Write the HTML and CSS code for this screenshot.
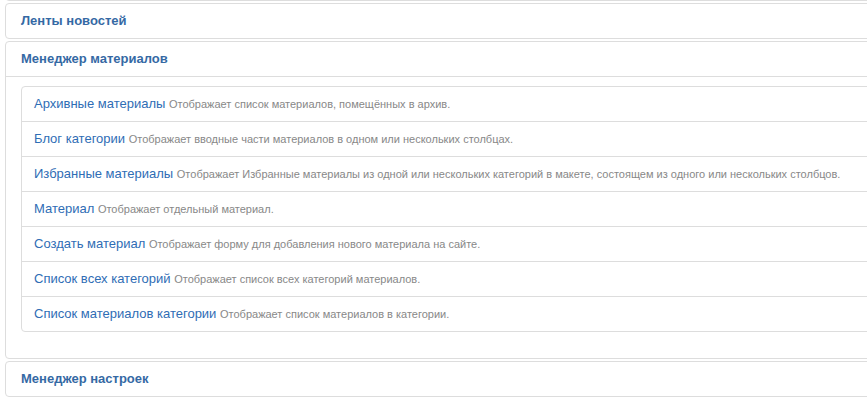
FILE: index.html
```html
<!DOCTYPE html>
<html lang="ru">
<head>
    <meta charset="utf-8">
    <title>Модули</title>
    <link rel="stylesheet" href="styles.css">
</head>
<body>
    <div class="accordion">
        <div class="panel panel-first">
            <div class="panel-heading"></div>
        </div>
        <div class="panel">
            <div class="panel-heading"><a href="#">Ленты новостей</a></div>
        </div>
        <div class="panel">
            <div class="panel-heading"><a href="#">Менеджер материалов</a></div>
            <div class="panel-body">
                <ul class="list">
                    <li><a href="#">Архивные материалы</a> <small>Отображает список материалов, помещённых в архив.</small></li>
                    <li><a href="#">Блог категории</a> <small>Отображает вводные части материалов в одном или нескольких столбцах.</small></li>
                    <li><a href="#">Избранные материалы</a> <small>Отображает Избранные материалы из одной или нескольких категорий в макете, состоящем из одного или нескольких столбцов.</small></li>
                    <li><a href="#">Материал</a> <small>Отображает отдельный материал.</small></li>
                    <li><a href="#">Создать материал</a> <small>Отображает форму для добавления нового материала на сайте.</small></li>
                    <li><a href="#">Список всех категорий</a> <small>Отображает список всех категорий материалов.</small></li>
                    <li><a href="#">Список материалов категории</a> <small>Отображает список материалов в категории.</small></li>
                </ul>
            </div>
        </div>
        <div class="panel">
            <div class="panel-heading"><a href="#">Менеджер настроек</a></div>
        </div>
    </div>
</body>
</html>
```

FILE: styles.css
```css
body
{
    margin: 0;
    overflow: hidden;
    background: #fff;
    font-family: "Liberation Sans", Arial, sans-serif;
}

.accordion
{
    width: 920px;
    padding-left: 5px;
}

.panel
{
    margin-top: 2px;
    border: 1px solid #ddd;
    border-radius: 4px;
    background: #fff;
}

.panel-first
{
    margin-top: -35px;
}

.panel-heading
{
    height: 34px;
    padding: 0 15px;
    font-size: 13px;
    line-height: 34px;
}

.panel-heading a
{
    font-weight: bold;
    color: #3569a4;
    text-decoration: none;
}

.panel-body
{
    border-top: 1px solid #ddd;
    padding: 9px 15px 26px 15px;
}

.list
{
    list-style: none;
    margin: 0;
    padding: 0;
    border: 1px solid #ddd;
    border-radius: 4px;
}

.list li
{
    height: 34px;
    padding: 0 12px;
    font-size: 13px;
    line-height: 34px;
    white-space: nowrap;
}

.list li + li
{
    border-top: 1px solid #ddd;
}

.list a
{
    color: #2f6db5;
    text-decoration: none;
}

.list small
{
    font-size: 11px;
    color: #888;
}
```
